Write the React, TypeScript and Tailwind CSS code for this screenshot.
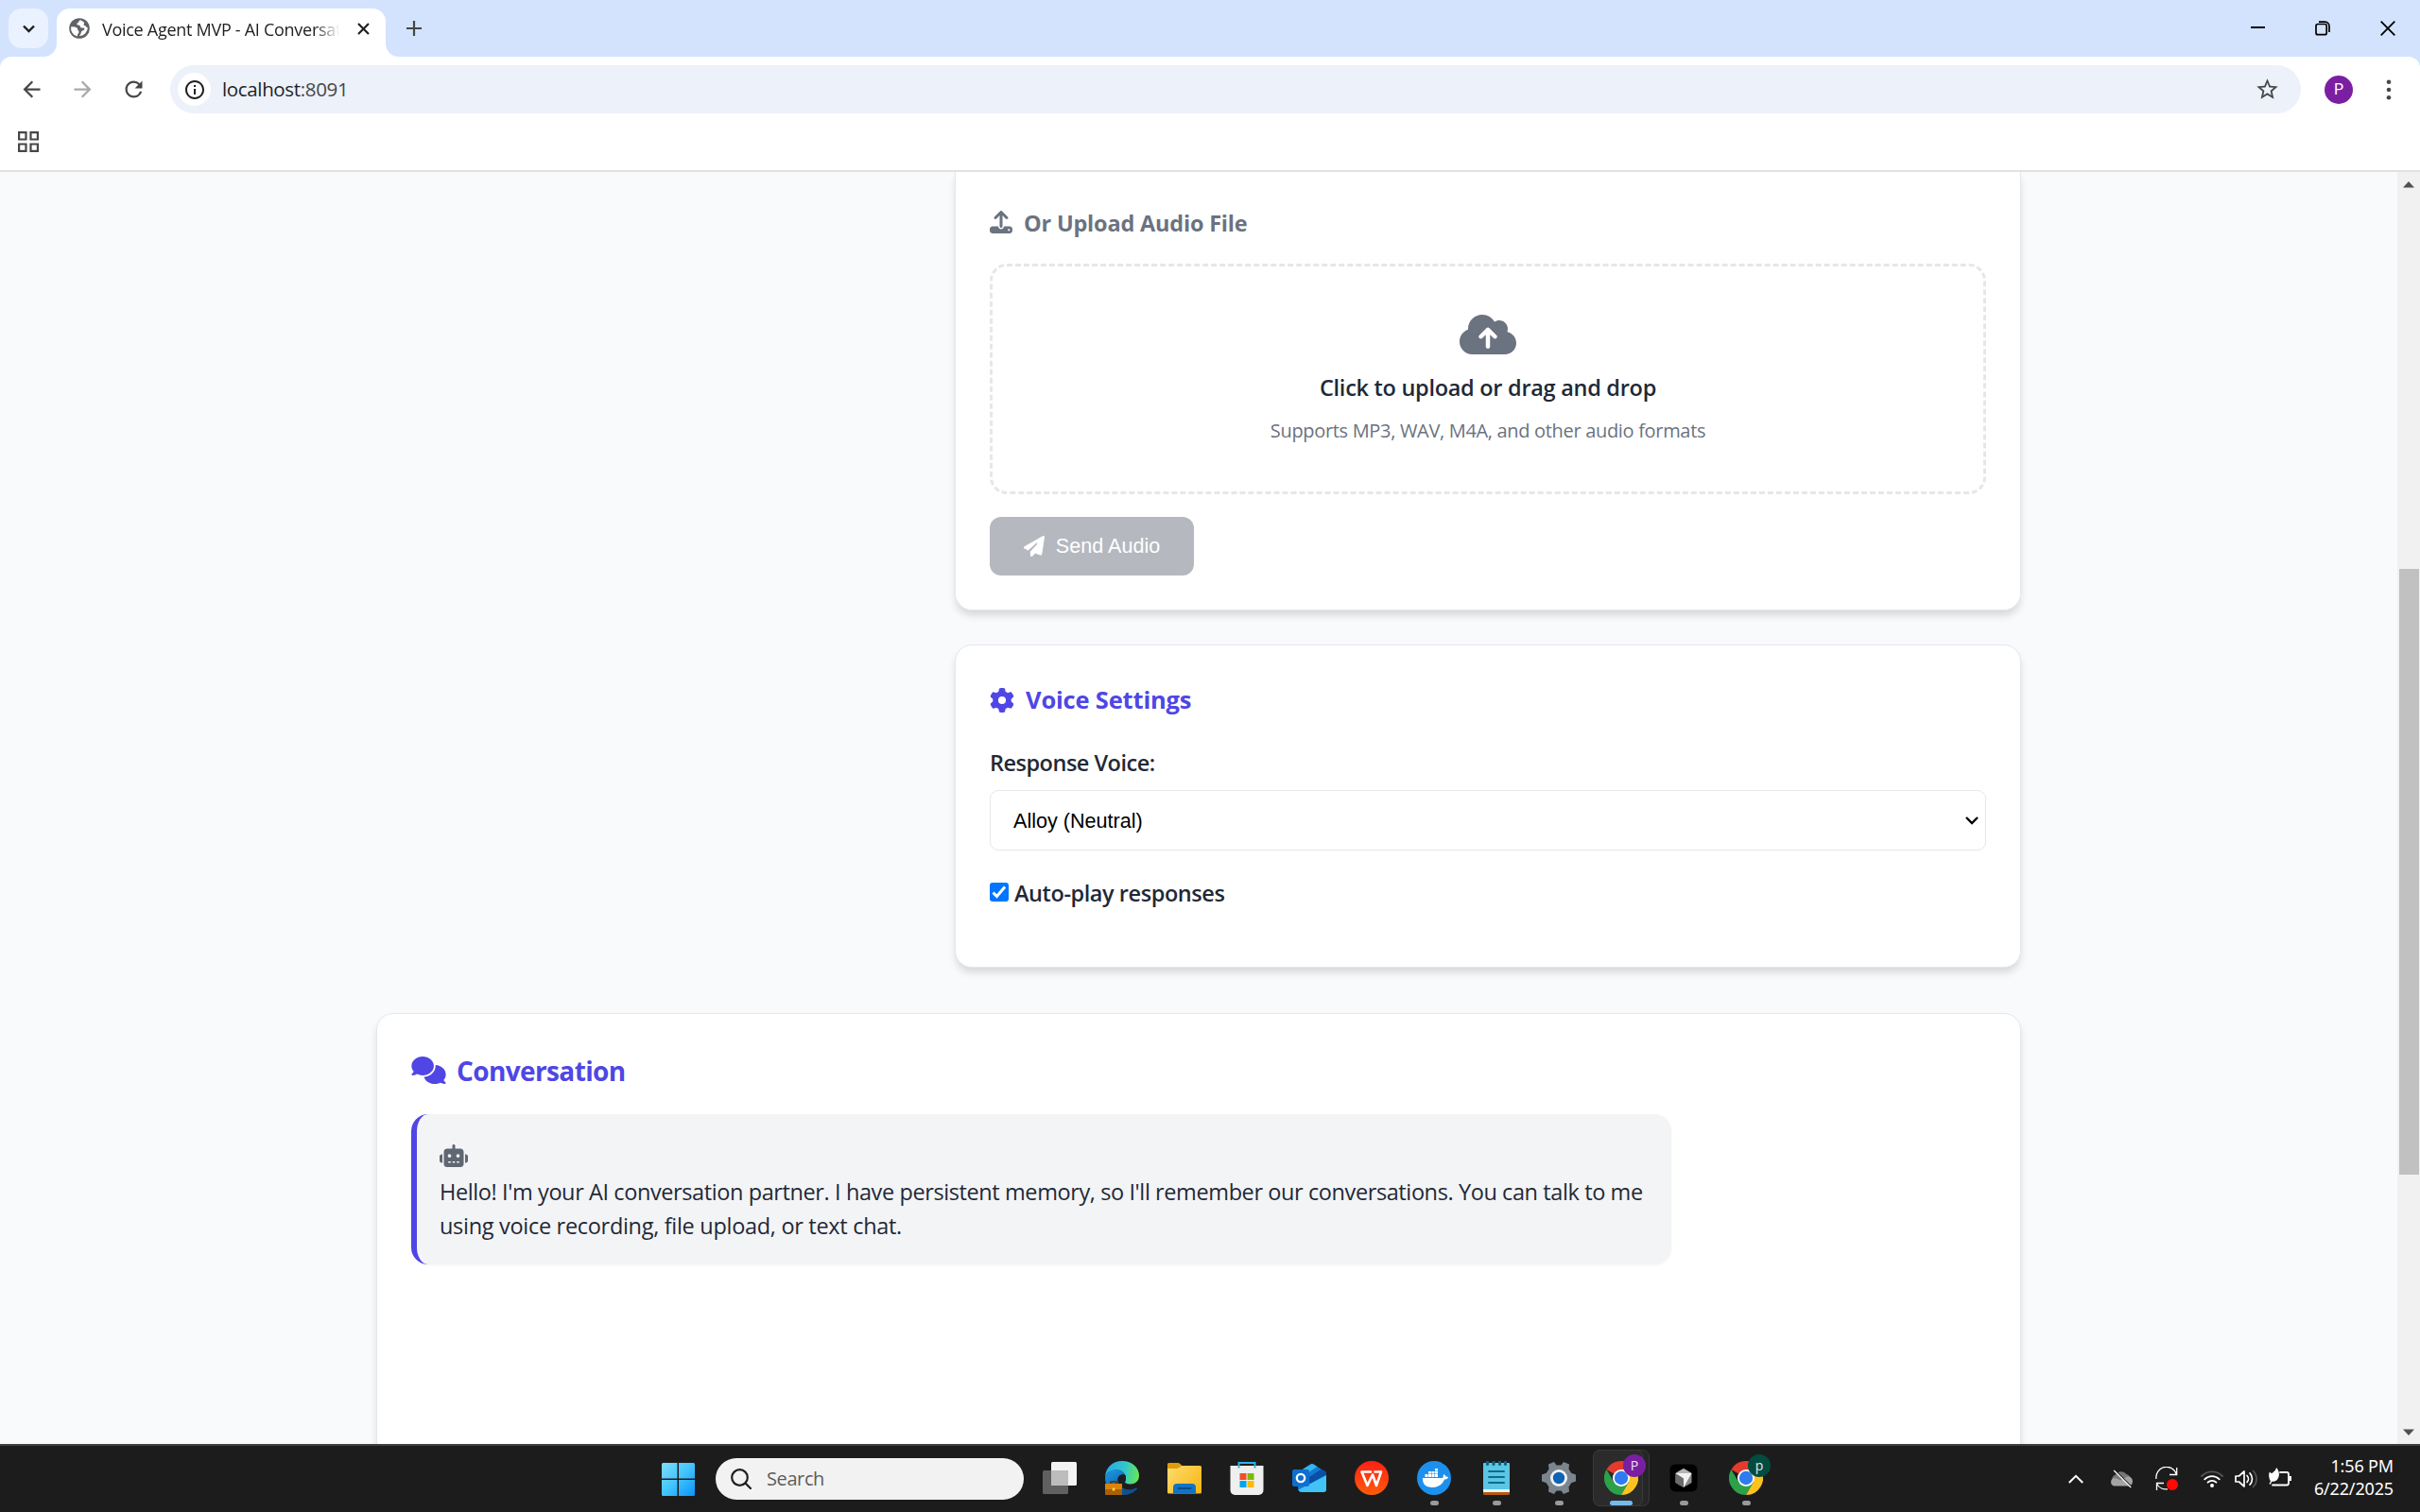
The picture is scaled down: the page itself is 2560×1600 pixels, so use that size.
import { FaCloudArrowUp, FaComments, FaGear, FaPaperPlane, FaRobot, FaUpload } from "react-icons/fa6";
import { MdArrowBack, MdArrowForward, MdOutlineInfo, MdRefresh, MdStarOutline } from "react-icons/md";

const TabStrip = () => (
    <header className="h-[60px] w-full flex items-center justify-between bg-[#d3e3fd]">
        <div className="flex items-end h-full">
            <div className="w-[60px] pl-[9px] pb-[9px]">
                <button className="size-[42px] rounded-[14px] bg-[#ebf2ff] flex items-center justify-center">
                    <svg width="13" height="9" viewBox="0 0 13 9" fill="none" stroke="#1f1f1f" strokeWidth="2.4">
                        <path d="M1 1.5 6.5 7 12 1.5" />
                    </svg>
                </button>
            </div>
            <div className="relative w-[348px] h-[51px] rounded-t-[14px] bg-white flex items-center pl-[13px] pr-[17px]">
                <svg className="absolute -left-[14px] bottom-0" width="14" height="14"><path d="M14 0v14H0A14 14 0 0 0 14 0z" fill="#fff" /></svg>
                <svg className="absolute -right-[14px] bottom-0" width="14" height="14"><path d="M0 0v14h14A14 14 0 0 1 0 0z" fill="#fff" /></svg>
                <svg className="shrink-0 -mt-[9px]" width="22" height="22" viewBox="0 0 22 22">
                    <circle cx="11" cy="11" r="10.8" fill="#5f6368" />
                    <path d="M12 2.3c-2 .6-1 2.2-2.6 2.7-1.2.4-1.3 1.5-.6 2.2.6.7 2 .2 2.7 1 .8.8.2 1.9 1.5 2.2h2.6c.9 0 1.1 1.3.4 2.1-.9 1-2.6.8-3 2.2-.4 1.3-.6 3.3-2.4 4.2A8.9 8.9 0 0 0 19.8 10c-.8.2-1.7-.1-2-1-.3-1-1.6-.6-2.1-1.4-.5-.9.5-1.5.3-2.5-.2-.9-1.6-1.5-4-2.8z" fill="#fff" />
                    <path d="M2.2 9.3c2 .1 4.6 0 6.2 1.2 1.3 1 .3 2.2 1.5 2.9 1 .6.7 2.4-.3 3.4-.7.7-.6 1.7-.9 2.7A8.9 8.9 0 0 1 2.2 9.3z" fill="#fff" />
                </svg>
                <span className="ml-[13px] w-[252px] -mt-[7px] overflow-hidden whitespace-nowrap text-[18px] tracking-[-0.28px] text-[#1f1f1f] [mask-image:linear-gradient(to_right,black_225px,transparent_251px)]">
                    Voice Agent MVP - AI Conversat
                </span>
                <svg className="ml-auto -mt-[9px] shrink-0" width="13" height="13" viewBox="0 0 13 13" stroke="#1f1f1f" strokeWidth="2.2">
                    <path d="M1 1l11 11M12 1L1 12" />
                </svg>
            </div>
            <svg className="ml-[22px] mb-[22px]" width="16" height="16" viewBox="0 0 16 16" stroke="#444746" strokeWidth="2.2">
                <path d="M0 8h16M8 0v16" />
            </svg>
        </div>
        <div className="flex items-center gap-[53px] pr-[26px]">
            <svg width="15" height="16" viewBox="0 0 15 16"><path d="M0 7h15" stroke="#000" strokeWidth="2" /></svg>
            <svg width="16" height="16" viewBox="0 0 16 16" fill="none" stroke="#000" strokeWidth="1.7">
                <rect x="1" y="3.5" width="11.2" height="11.2" rx="2" />
                <path d="M4 1.2h6.5A4.4 4.4 0 0 1 15 5.7V12" />
            </svg>
            <svg width="16" height="16" viewBox="0 0 16 16" stroke="#000" strokeWidth="1.8"><path d="M.7.7l14.6 14.6M15.3.7L.7 15.3" /></svg>
        </div>
    </header>
)

const Toolbar = () => (
    <div className="bg-[#d3e3fd]">
        <div className="h-[120px] w-full rounded-t-[12px] bg-white pt-[9px]">
            <div className="h-[51px] flex items-center">
                <div className="w-[180px] pl-5 flex items-center gap-[27px] text-[#474747]">
                    <MdArrowBack className="size-[27px]" />
                    <MdArrowForward className="size-[27px] text-[#a9a9a9]" />
                    <MdRefresh className="size-[27px]" />
                </div>
                <div className="w-[2254px] h-[51px] rounded-full bg-[#ecf1fa] flex items-center pl-2 pr-[22px]">
                    <span className="size-[35px] rounded-full bg-white flex items-center justify-center">
                        <MdOutlineInfo className="size-6 text-[#1f1f1f]" />
                    </span>
                    <span className="ml-[12px] text-[20.5px] tracking-[-0.35px] text-[#1f1f1f]">localhost<span className="text-[#474747]">:8091</span></span>
                    <MdStarOutline className="ml-auto size-[27px] text-[#474747]" />
                </div>
                <span className="ml-[25px] size-[30px] rounded-full bg-[#7b1fa2] text-white text-[16px] flex items-center justify-center font-['Roboto',sans-serif]">P</span>
                <svg className="ml-[35px]" width="6" height="24" viewBox="0 0 6 24" fill="#474747">
                    <circle cx="3" cy="3.7" r="2.3" />
                    <circle cx="3" cy="12" r="2.3" />
                    <circle cx="3" cy="20.3" r="2.3" />
                </svg>
            </div>
            <svg className="ml-[19px] mt-[19px]" width="22" height="22" viewBox="0 0 22 22" fill="none" stroke="#474747" strokeWidth="2.2">
                <path d="M1.1 1.1h7.4v7.4H1.1zM13.5 1.1h7.4v7.4h-7.4zM1.1 13.5h7.4v7.4H1.1zM13.5 13.5h7.4v7.4h-7.4z" />
            </svg>
        </div>
        <div className="h-[2px] bg-[#e1e1e1]" />
    </div>
)

const UploadCard = () => (
    <section className="h-[464px] w-[1128px] shrink-0 self-end rounded-b-[18px] border border-t-0 border-[#e5e7eb] bg-white px-9 pt-[41px] shadow-[0_6px_9px_-1px_rgba(0,0,0,0.14)]">
        <h3 className="h-6 flex items-center gap-3 text-[#6b7280] font-bold text-[23.5px] tracking-[-0.2px]">
            <FaUpload className="size-6" />
            <span className="mt-[3px]">Or Upload Audio File</span>
        </h3>
        <div className="mt-8 h-[244px] rounded-[18px] border-[3px] border-dashed border-[#e5e7eb] flex flex-col items-center pt-12">
            <FaCloudArrowUp className="w-[60px] h-12 text-[#6b7280]" />
            <p className="mt-[14px] leading-9 text-[23.5px] tracking-[-0.28px] font-semibold text-[#1f2937]">Click to upload or drag and drop</p>
            <p className="mt-[12px] leading-8 text-[20px] tracking-[-0.32px] text-[#6b7280]">Supports MP3, WAV, M4A, and other audio formats</p>
        </div>
        <button className="mt-6 w-[216px] h-[62px] rounded-[12px] bg-[#b5b8bf] text-white text-[21.6px] flex items-center justify-center gap-3 font-['Liberation_Sans',sans-serif]">
            <FaPaperPlane className="size-[22px]" />
            Send Audio
        </button>
    </section>
)

const SettingsCard = () => (
    <section className="mt-9 h-[342px] w-[1128px] shrink-0 self-end rounded-[18px] border border-[#e5e7eb] bg-white px-9 pt-[40px] shadow-[0_6px_9px_-1px_rgba(0,0,0,0.14)]">
        <h3 className="h-9 flex items-center gap-3 text-[#4f46e5] font-bold text-[25.5px] tracking-[-0.18px]">
            <FaGear className="size-[26px] -mt-px" />
            <span className="-mt-px">Voice Settings</span>
        </h3>
        <p className="mt-[30px] leading-9 text-[23.5px] tracking-[-0.5px] font-semibold text-[#1f2937]">Response Voice:</p>
        <div className="mt-[11px] h-16 rounded-[9px] border border-[#e5e7eb] flex items-center justify-between pl-6 pr-[7px] text-[21.6px] text-black font-['Liberation_Sans',sans-serif]">
            <span className="mt-[2px]">Alloy (Neutral)</span>
            <svg width="14" height="9" viewBox="0 0 14 9" fill="none" stroke="#000" strokeWidth="2.4"><path d="M1 1l6 6 6-6" /></svg>
        </div>
        <label className="mt-[27px] h-9 flex items-center gap-[6px] text-[23.5px] tracking-[-0.43px] font-semibold text-[#1f2937]">
            <span className="-mt-[2px] size-5 rounded-[3px] bg-[#0075ff] flex items-center justify-center">
                <svg width="16" height="14" viewBox="0 0 16 14" fill="none" stroke="#fff" strokeWidth="3"><path d="M1.5 7.5l4 4L14 1.5" /></svg>
            </span>
            <span className="mt-[2px]">Auto-play responses</span>
        </label>
    </section>
)

const ConversationCard = () => (
    <section className="mt-12 h-[520px] w-[1740px] shrink-0 rounded-[18px] border border-[#e5e7eb] bg-white px-9 pt-[36px] shadow-[0_6px_9px_-1px_rgba(0,0,0,0.14)]">
        <h2 className="h-12 flex items-center gap-[11px] text-[#4f46e5] font-bold text-[28px] tracking-[-0.62px]">
            <FaComments className="w-[37px] h-[29px] -mt-px" />
            Conversation
        </h2>
        <div className="mt-[22px] w-[1333px] h-[159px] rounded-[18px] border-l-[6px] border-[#4f46e5] bg-[#f3f4f6] pl-6 pt-8 shadow-[0_1px_3px_rgba(0,0,0,0.05)]">
            <FaRobot className="w-[30px] h-6 text-[#5f6773]" />
            <p className="mt-[8px] leading-9 text-[23.5px] tracking-[-0.4px] whitespace-nowrap text-[#1f2937]">
                Hello! I'm your AI conversation partner. I have persistent memory, so I'll remember our conversations. You can talk to me
                <br />
                <span className="tracking-[-0.3px]">using voice recording, file upload, or text chat.</span>
            </p>
        </div>
    </section>
)

const ScrollBar = () => (
    <div className="w-6 h-full bg-[#f1f1f1] flex flex-col items-center">
        <svg className="mt-[10px]" width="12" height="7"><path d="M6 0l6 6.5H0z" fill="#505050" /></svg>
        <div className="mt-[403px] h-[641px] w-[21px] bg-[#c1c1c1]" />
        <svg className="mt-auto mb-[9px]" width="12" height="7"><path d="M0 .5h12L6 7z" fill="#505050" /></svg>
    </div>
)

const StartIcon = () => (
    <svg width="35" height="35" viewBox="0 0 35 35">
        <defs>
            <linearGradient id="win" x1="0" y1="0" x2="35" y2="35" gradientUnits="userSpaceOnUse">
                <stop offset="0" stopColor="#7fdcfb" /><stop offset=".5" stopColor="#42c4fc" /><stop offset="1" stopColor="#0a93fb" />
            </linearGradient>
        </defs>
        <path d="M1.5 0H16.5V16.5H0V1.5A1.5 1.5 0 0 1 1.5 0zM18 0h15.5A1.5 1.5 0 0 1 35 1.5V16.5H18zM0 18h16.5v17H1.5A1.5 1.5 0 0 1 0 33.5zM18 18h17v15.5a1.5 1.5 0 0 1-1.5 1.5H18z" fill="url(#win)" />
    </svg>
)

const TaskViewIcon = () => (
    <svg width="36" height="36" viewBox="0 0 36 36">
        <rect x="9" y="1" width="27" height="25" rx="1.5" fill="#f3f3f3" />
        <rect x="0" y="10" width="27" height="25" rx="1.5" fill="#606060" />
        <path d="M9 10h16.5a1.5 1.5 0 0 1 1.5 1.5V26H9z" fill="#bdbdbd" />
    </svg>
)

const EdgeIcon = () => (
    <svg width="36" height="36" viewBox="0 0 36 36">
        <defs>
            <linearGradient id="edgeTop" x1="0" y1="8" x2="36" y2="14" gradientUnits="userSpaceOnUse">
                <stop offset="0" stopColor="#2aa7e6" /><stop offset=".55" stopColor="#30c5cf" /><stop offset="1" stopColor="#69e84f" />
            </linearGradient>
            <linearGradient id="edgeLeft" x1="0" y1="10" x2="16" y2="34" gradientUnits="userSpaceOnUse">
                <stop offset="0" stopColor="#1c9be6" /><stop offset="1" stopColor="#0c59a4" />
            </linearGradient>
        </defs>
        <path d="M0 18C0 7 8 0 18 0c11 0 18 7.5 18 15.5 0 6-4.5 9-9.5 9-3.5 0-5.5-1-5.5-2.2 0-1 1-1.3 1-4.3 0-4-4-8.5-10-8.5C5 9.5 1 13.5 0 18z" fill="url(#edgeTop)" />
        <path d="M0 18c1-5 6-9 12-9 5 0 8.5 3 9.5 6-3-2-8 0-8 5 0 6 5.5 10.5 12 10.5 3 0 5-.6 7-1.8 1.2-.6 1.5 0 1 1C30 33.5 25 36 18 36 8 36 0 28 0 18z" fill="url(#edgeLeft)" />
        <path d="M13.5 20c0 6 5.5 10.5 12 10.5 3 0 5-.6 7-1.8 1.2-.6 1.5 0 1 1C30 33.5 25 36 18 36c-3-3-5-9-4.5-16z" fill="#124f91" />
        <path d="M21.5 15c-3-2-8 0-8 5 0 2 .6 3.6 1.6 5.2 1.5.9 5 1.3 9 .3-2-.4-3.1-1.8-3.1-3.2 0-1 1-1.3 1-4.3 0-1-.2-2-.5-3z" fill="#1b1f24" />
        <path d="M6 24v-2h6v2" fill="none" stroke="#5c3205" strokeWidth="1.5" />
        <rect y="24" width="18" height="12" rx="1" fill="#a85f05" />
        <rect y="24" width="18" height="6" fill="#d98307" />
        <rect x="7.8" y="28.5" width="2.5" height="3" fill="#ffd84a" />
    </svg>
)

const FolderIcon = () => (
    <svg width="36" height="36" viewBox="0 0 36 36">
        <defs>
            <linearGradient id="fold" x1="0" y1="4" x2="36" y2="36" gradientUnits="userSpaceOnUse">
                <stop offset="0" stopColor="#ffdc70" /><stop offset="1" stopColor="#f6b40f" />
            </linearGradient>
        </defs>
        <path d="M0 3.5A1.5 1.5 0 0 1 1.5 2H11c1.5 0 2.5 1 4.5 3v6H0z" fill="#dd9e08" />
        <path d="M0 8h10c3 0 3.5-3 6-3h18.5A1.5 1.5 0 0 1 36 6.5V33a1.5 1.5 0 0 1-1.5 1.5h-33A1.5 1.5 0 0 1 0 33z" fill="url(#fold)" />
        <path d="M6 34.5V28a4 4 0 0 1 4-4h16a4 4 0 0 1 4 4v6.5z" fill="#1273c4" />
        <path d="M11.5 29h13" stroke="#0a4a86" strokeWidth="2" strokeLinecap="round" />
    </svg>
)

const StoreIcon = () => (
    <svg width="36" height="36" viewBox="0 0 36 36">
        <path d="M.5 5h35v26a5 5 0 0 1-5 5h-25a5 5 0 0 1-5-5z" fill="#efefef" />
        <path d="M9.5 7.5V2h17v5.5" fill="none" stroke="#2fb4e8" strokeWidth="2" />
        <path d="M10.5 13h7v7h-7z" fill="#f25022" />
        <path d="M18.5 13h7v7h-7z" fill="#7fba00" />
        <path d="M10.5 21h7v7h-7z" fill="#00a4ef" />
        <path d="M18.5 21h7v7h-7z" fill="#ffb900" />
    </svg>
)

const OutlookIcon = () => (
    <svg width="36" height="36" viewBox="0 0 36 36">
        <path d="M6 12L19.5 3.5a3 3 0 0 1 3 0L36 12v18a3 3 0 0 1-3 3H10a4 4 0 0 1-4-4z" fill="#1278d2" />
        <path d="M6 12L19.5 3.5a3 3 0 0 1 3 0l4 2.5L10 17z" fill="#36b5ee" />
        <path d="M15 19L31 8.5l5 3.5v5L18 27z" fill="#0a4ea6" />
        <path d="M36 15v15a3 3 0 0 1-3 3H10a4 4 0 0 1-3.5-2.5L18 24.5z" fill="#3fc4f5" />
        <rect y="9" width="18" height="18" rx="2" fill="#0f6fd0" />
        <circle cx="9" cy="18" r="4.2" fill="none" stroke="#fff" strokeWidth="2.3" />
    </svg>
)

const WpsIcon = () => (
    <svg width="36" height="36" viewBox="0 0 36 36">
        <defs>
            <linearGradient id="wps" x1="0" y1="0" x2="0" y2="1"><stop offset="0" stopColor="#ff1f16" /><stop offset="1" stopColor="#ff5c0a" /></linearGradient>
        </defs>
        <circle cx="18" cy="18" r="18" fill="url(#wps)" />
        <path d="M17 11.5H7.5L13.5 26l5.5-11.5L23 26l5-14.5h-6.5" fill="none" stroke="#fff" strokeWidth="2.6" strokeLinejoin="round" strokeLinecap="round" />
    </svg>
)

const DockerIcon = () => (
    <svg width="36" height="36" viewBox="0 0 36 36">
        <circle cx="18" cy="18" r="18" fill="#1d90ee" />
        <path d="M6 18h20.5c1-.3 1.5-1 1.2-2.5l.6-1.5c1.5.8 2 1.8 2 2.6 1 0 2 .1 2.7.6-.6 1.5-2 2.3-4 2.3C26.5 25.5 22 28 16 28 9.5 28 5.5 24.5 6 18z" fill="#fff" />
        <path d="M8.5 14h3v3h-3zM12 14h3v3h-3zM15.5 14h3v3h-3zM19 14h3v3h-3zM12 11h3v2.5h-3zM15.5 11h3v2.5h-3zM19 11h3v2.5h-3zM19 8h3v2.5h-3z" fill="#fff" />
    </svg>
)

const NotepadIcon = () => (
    <svg width="36" height="36" viewBox="0 0 36 36">
        <path d="M4 30h28v4.5a1.5 1.5 0 0 1-1.5 1.5h-25A1.5 1.5 0 0 1 4 34.5z" fill="#b4590d" />
        <path d="M4 29h28v4H4z" fill="#eceff1" />
        <path d="M5 2h26a1 1 0 0 1 1 1v27H4V3a1 1 0 0 1 1-1z" fill="#5cc5e3" />
        <path d="M8.5 1v2.5M15 1v2.5M21.5 1v2.5M27.5 1v2.5" stroke="#0b6285" strokeWidth="3" strokeLinecap="round" />
        <path d="M10 11h16M10 17h16M10 23h16" stroke="#0b6c8f" strokeWidth="2" strokeLinecap="round" />
    </svg>
)

const SettingsIcon = () => (
    <svg width="36" height="36" viewBox="0 0 36 36">
        <path d="M13 1l2.5 3.5h5L23 1l6 2.6-.5 5 2.7 4.2 4.8 1.7v7l-4.8 1.7-2.7 4.2.5 5L23 35l-2.5-3.5h-5L13 35l-6-2.6.5-5-2.7-4.2L0 21.5v-7l4.8-1.7 2.7-4.2-.5-5z" fill="#7b858f" />
        <circle cx="18" cy="18" r="9" fill="#f2f2f2" />
        <circle cx="18" cy="18" r="6.2" fill="#0f63b5" />
    </svg>
)

const ChromeIcon = () => (
    <svg width="36" height="36" viewBox="0 0 36 36">
        <path d="M18 18L2.4 9A18 18 0 0 1 33.6 9z" fill="#e33b2e" />
        <path d="M10.2 22.5L2.4 9A18 18 0 0 0 18 36l7.8-13.5z" fill="#2da04a" />
        <path d="M33.6 9A18 18 0 0 1 18 36l7.8-13.5L18 9z" fill="#fcc31e" />
        <circle cx="18" cy="18" r="9" fill="#fff" />
        <circle cx="18" cy="18" r="7.2" fill="#2f7bf0" />
    </svg>
)

const CursorIcon = () => (
    <svg width="36" height="36" viewBox="0 0 36 36">
        <rect x="3.5" y="3.5" width="29" height="29" rx="6" fill="#000" />
        <path d="M18 8l8.5 5v10L18 28l-8.5-5V13z" fill="#8b8b8b" />
        <path d="M9.5 13L18 8l8.5 5z" fill="#b5b5b5" />
        <path d="M9.5 13l8.5 5.5V28l-8.5-5z" fill="#6b6b6b" />
        <path d="M9.5 13h17L18 28v-9.5z" fill="#f1f1f1" />
    </svg>
)

const apps = [
    { name: "task-view", icon: <TaskViewIcon /> },
    { name: "edge", icon: <EdgeIcon /> },
    { name: "explorer", icon: <FolderIcon /> },
    { name: "store", icon: <StoreIcon /> },
    { name: "outlook", icon: <OutlookIcon /> },
    { name: "wps", icon: <WpsIcon /> },
    { name: "docker", icon: <DockerIcon />, running: true },
    { name: "notepad", icon: <NotepadIcon />, running: true },
    { name: "settings", icon: <SettingsIcon />, running: true },
    { name: "chrome", icon: <ChromeIcon />, active: true, badge: "P", badgeClass: "bg-[#7b1fa2]" },
    { name: "cursor", icon: <CursorIcon />, running: true },
    { name: "chrome-2", icon: <ChromeIcon />, running: true, badge: "p", badgeClass: "bg-[#004d40]" },
]

const Tray = () => (
    <div className="h-full flex items-center pr-[28px]">
        <svg width="16" height="10" viewBox="0 0 16 10" fill="none" stroke="#fff" strokeWidth="2"><path d="M.8 9L8 1.8 15.2 9" /></svg>
        <svg className="ml-7 -mt-px" width="24" height="20" viewBox="0 0 24 20">
            <path d="M3 13A5 5 0 0 1 6 5.5 7 7 0 0 1 17.5 5 6 6 0 0 1 22 12z" fill="#777" />
            <path d="M4.5 17.5a4.3 4.3 0 0 1-.7-8.2C8 8.5 10 12 13 11c2.500-1.5 4-4 7-3.5 2.5.5 4 2.5 4 5 0 3-2 5-5 5z" fill="#a3a3a3" />
            <path d="M5.5 1l17 17" stroke="#1c1c1c" strokeWidth="1.5" />
            <path d="M4.2 1l18 18" stroke="#f0f0f0" strokeWidth="1.4" />
        </svg>
        <svg className="ml-6 -mt-px" width="24" height="26" viewBox="0 0 24 26" fill="none" stroke="#fff" strokeWidth="1.3">
            <path d="M1 13A11 11 0 0 1 22.5 8.5M22.7 1v7.5H15M13 23.8A11 11 0 0 1 1.5 18M1.5 25v-7.5H9" />
            <circle cx="18" cy="19" r="6" fill="#ff0a00" stroke="none" />
        </svg>
        <svg className="ml-6" width="24" height="20" viewBox="0 0 24 20" fill="none" strokeWidth="1.8" strokeLinecap="round">
            <path d="M1 7a15.5 15.5 0 0 1 22 0" stroke="#555" />
            <path d="M4.2 10.3a11 11 0 0 1 15.6 0M7.5 13.7a6.4 6.4 0 0 1 9 0" stroke="#fff" />
            <circle cx="12" cy="17" r="2" fill="#fff" />
        </svg>
        <svg className="ml-3" width="24" height="20" viewBox="0 0 24 20" fill="none" stroke="#fff" strokeWidth="1.7" strokeLinejoin="round" strokeLinecap="round">
            <path d="M1 7h3.5L10 2v16l-5.5-5H1z" />
            <path d="M13 6.5a5 5 0 0 1 0 7M16 3.8a9 9 0 0 1 0 12.4" />
            <path d="M19.5 1.5a12 12 0 0 1 0 17" stroke="#555" />
        </svg>
        <svg className="ml-3 -mt-[5px]" width="24" height="22" viewBox="0 0 24 22">
            <path d="M12 6h7a2 2 0 0 1 2 2v9.5a2 2 0 0 1-2 2H4" fill="none" stroke="#fff" strokeWidth="1.8" strokeLinecap="round" />
            <path d="M21.5 10H24v5h-2.5zM8 1c3 3 4 8 1.5 12-1.5 2.5-4 3-6 2.500L1.5 19l-1-1 1.5-2.5C-.5 11.5 0 7 1 5.5 2 7 3 7.5 4 6.5 6 5 7.5 3.5 8 1z" fill="#fff" />
        </svg>
        <div className="-mt-[5px] w-[108px] text-right text-white text-[18px] leading-6 tracking-[-0.15px] font-['Noto_Sans',sans-serif]">
            <div>1:56 PM</div>
            <div>6/22/2025</div>
        </div>
    </div>
)

const TaskBar = () => (
    <footer className="h-[72px] w-full border-t-2 border-[#404040] bg-[#1c1c1c] flex items-center justify-between">
        <div className="h-full flex items-center pl-[700px]">
            <StartIcon />
            <div className="ml-[22px] w-[326px] h-11 -mt-px rounded-full bg-[#f2f2f2] flex items-center pl-4 text-[20px] tracking-[-0.4px] text-[#5d5d5d]">
                <svg className="mr-[16px]" width="22" height="22" viewBox="0 0 22 22" fill="none" stroke="#1f1f1f" strokeWidth="2.2" strokeLinecap="round">
                    <circle cx="9.5" cy="9.5" r="8.3" /><path d="M15.5 15.5l5.5 5.5" />
                </svg>
                Search
            </div>
            <div className="ml-[5px] h-full flex">
                {apps.map((app) => (
                    <div key={app.name} className="relative w-[66px] h-full flex items-center justify-center">
                        {app.active && <span className="absolute left-[33px] top-1 w-[30px] h-[60px] rounded-[7px] border border-[#383838] bg-[#262626]" />}
                        {app.active && <span className="absolute left-[3px] top-1 w-[53px] h-[60px] rounded-[7px] border border-[#3a3a3a] bg-[#2b2b2b]" />}
                        <span className="relative mt-[-2px]">{app.icon}</span>
                        {app.badge && <span className={`absolute left-[35px] top-[9px] size-6 rounded-full ${app.badgeClass} flex items-center justify-center text-[14px] leading-none text-[#ece3f2]`}>{app.badge}</span>}
                        {app.running && <span className="absolute bottom-[7px] w-[9px] h-[5px] rounded-full bg-[#9a9a9a]" />}
                        {app.active && <span className="absolute bottom-[7px] left-[21px] w-6 h-[5px] rounded-full bg-[#76b9ed]" />}
                    </div>
                ))}
            </div>
        </div>
        <Tray />
    </footer>
)

const App = () => {
    return (
        <div className="w-[2560px] h-[1600px] flex flex-col overflow-hidden font-['Open_Sans',sans-serif]">
            <TabStrip />
            <Toolbar />
            <main className="h-[1346px] flex bg-[#f9fafc] overflow-hidden">
                <div className="flex-1 h-full flex flex-col px-[398px] overflow-hidden">
                    <UploadCard />
                    <SettingsCard />
                    <ConversationCard />
                </div>
                <ScrollBar />
            </main>
            <TaskBar />
        </div>
    )
}

export default App
